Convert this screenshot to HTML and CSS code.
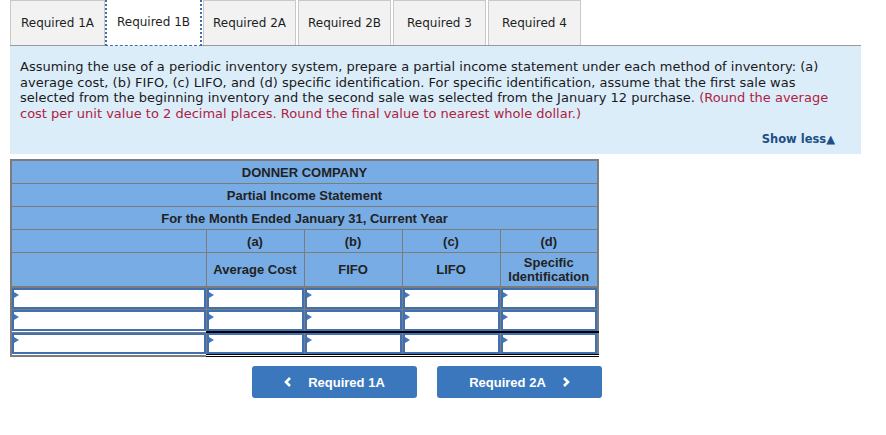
FILE: index.html
```html
<!DOCTYPE html>
<html lang="en">
<head>
<meta charset="UTF-8" />
<title>Required 1B</title>
<link rel="stylesheet" href="styles.css">
</head>
<body>
<div class="page">
  <div class="tabs">
    <div class="tab">Required 1A</div>
    <div class="tab active">Required 1B</div>
    <div class="tab">Required 2A</div>
    <div class="tab">Required 2B</div>
    <div class="tab">Required 3</div>
    <div class="tab">Required 4</div>
  </div>

  <div class="prompt">
    <p>Assuming the use of a periodic inventory system, prepare a partial income statement under each method of inventory: (a) average cost, (b) FIFO, (c) LIFO, and (d) specific identification. For specific identification, assume that the first sale was selected from the beginning inventory and the second sale was selected from the January 12 purchase. <span class="note">(Round the average cost per unit value to 2 decimal places. Round the final value to nearest whole dollar.)</span></p>
    <div class="show-less">Show less&#9650;</div>
  </div>

  <table class="sheet">
    <colgroup>
      <col class="c-label"><col class="c-num"><col class="c-num"><col class="c-num"><col class="c-num">
    </colgroup>
    <tr class="head"><td colspan="5">DONNER COMPANY</td></tr>
    <tr class="head"><td colspan="5">Partial Income Statement</td></tr>
    <tr class="head"><td colspan="5">For the Month Ended January 31, Current Year</td></tr>
    <tr class="head"><td></td><td>(a)</td><td>(b)</td><td>(c)</td><td>(d)</td></tr>
    <tr class="head tall"><td></td><td>Average Cost</td><td>FIFO</td><td>LIFO</td><td>Specific<br>Identification</td></tr>
    <tr class="entry">
      <td><div class="box"></div></td><td><div class="box"></div></td><td><div class="box"></div></td><td><div class="box"></div></td><td><div class="box"></div></td>
    </tr>
    <tr class="entry">
      <td><div class="box"></div></td><td><div class="box"></div></td><td><div class="box"></div></td><td><div class="box"></div></td><td><div class="box"></div></td>
    </tr>
    <tr class="entry total">
      <td><div class="box"></div></td><td class="sum"><div class="box"></div></td><td class="sum"><div class="box"></div></td><td class="sum"><div class="box"></div></td><td class="sum"><div class="box"></div></td>
    </tr>
  </table>

  <div class="nav">
    <button class="nav-btn">
      <svg width="8" height="12" viewBox="0 0 8 12"><path d="M6 2 L2 6 L6 10" fill="none" stroke="#fff" stroke-width="2.6"/></svg>
      <span>Required 1A</span>
    </button>
    <button class="nav-btn">
      <span>Required 2A</span>
      <svg width="8" height="12" viewBox="0 0 8 12"><path d="M2 2 L6 6 L2 10" fill="none" stroke="#fff" stroke-width="2.6"/></svg>
    </button>
  </div>
</div>
</body>
</html>
```

FILE: styles.css
```css
body {
  margin: 0;
  background: #fff;
  font-family: "DejaVu Sans", Verdana, sans-serif;
  color: #1a1a1a;
}
.page {
  padding: 0 10px;
}
.tabs {
  display: flex;
  width: 851px;
  height: 46px;
  border-bottom: 1px solid #9a9a9a;
  box-sizing: border-box;
}
.tab {
  width: 93px;
  margin-right: 2px;
  height: 45px;
  box-sizing: border-box;
  border: 1px solid #c9c9c9;
  border-bottom: none;
  background: #f2f2f2;
  font-size: 12px;
  line-height: 45px;
  text-align: center;
  color: #1e1e1e;
}
.tab:first-child {
  width: 95px;
  margin-right: 0;
}
.tab.active {
  background: #fff;
  border: 2px dotted #3f6ea8;
  border-top: none;
  border-bottom: 1px dashed #3f6ea8;
  height: 46px;
  margin-bottom: -1px;
  width: 97px;
  margin-right: 1px;
}
.prompt {
  width: 851px;
  box-sizing: border-box;
  background: #dcedfa;
  padding: 13px 10px 8px 10px;
}
.prompt p {
  margin: 0;
  font-size: 13px;
  line-height: 15.5px;
  color: #1a1a1a;
}
.note {
  color: #b0213f;
}
.show-less {
  text-align: right;
  padding-right: 16px;
  margin-top: 11px;
  font-size: 11.5px;
  font-weight: bold;
  color: #1e4f86;
}
.sheet {
  margin-top: 5px;
  border-collapse: collapse;
  border: 2px solid #7c7c7c;
  font-family: "Liberation Sans", Arial, sans-serif;
  font-size: 13px;
  font-weight: bold;
  color: #222;
  table-layout: fixed;
}
.c-label { width: 195px; }
.c-num { width: 98px; }
.sheet td {
  border: 1px solid #7c7c7c;
  padding: 0;
  text-align: center;
}
.head td {
  background: #78ace5;
  height: 22px;
}
.head.tall td {
  height: 33px;
  line-height: 14px;
  border-bottom: 2px solid #7c7c7c;
}
.entry td {
  height: 21px;
  background: #fff;
  vertical-align: top;
}
.box {
  position: relative;
  height: 17px;
  border: 2px solid #4070b0;
  background: #fff;
}
.box::before {
  content: "";
  position: absolute;
  left: 0;
  top: 2px;
  border-left: 5px solid #3f77c0;
  border-top: 3px solid transparent;
  border-bottom: 3px solid transparent;
}
.total .sum {
  border-top: 2px solid #000;
  border-bottom: 3px double #000;
}
.nav {
  display: flex;
  gap: 20px;
  padding-left: 242px;
  margin-top: 9px;
}
.nav-btn {
  width: 165px;
  height: 32px;
  background: #3b77bc;
  border: none;
  border-radius: 3px;
  color: #fff;
  font-family: "Liberation Sans", Arial, sans-serif;
  font-size: 13px;
  font-weight: bold;
  display: flex;
  align-items: center;
  justify-content: center;
  gap: 16px;
}
```
